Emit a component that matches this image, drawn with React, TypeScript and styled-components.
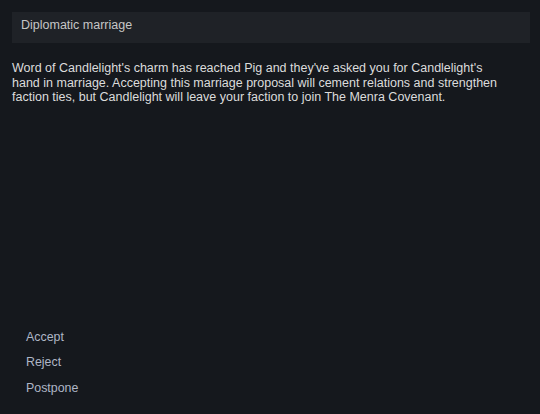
import styled, { createGlobalStyle } from 'styled-components';

const GlobalStyle = createGlobalStyle`
  html, body {
    margin: 0;
    padding: 0;
    background-color: #15181d;
  }
  * {
    box-sizing: border-box;
  }
`;

const Page = styled.div`
  width: 540px;
  height: 414px;
  display: flex;
  flex-direction: column;
  padding: 12px 10px 13px 12px;
  background-color: #15181d;
  font-family: "Liberation Sans", Arial, sans-serif;
  font-size: 12.5px;
`;

const TitleBar = styled.div`
  padding: 6px 9px 10px;
  line-height: 15px;
  background-color: #1f2227;
  color: #c6c6c6;
`;

const Message = styled.p`
  margin: 18px 17px 0 0;
  line-height: 14.5px;
  color: #dcdcdc;
`;

const Options = styled.div`
  margin-top: auto;
  display: flex;
  flex-direction: column;
  align-items: flex-start;
`;

const OptionButton = styled.button`
  border: none;
  background: none;
  padding: 0 14px;
  line-height: 25.5px;
  font-family: inherit;
  font-size: 12.4px;
  color: #aeb6c6;
  cursor: pointer;
`;

const options = ['Accept', 'Reject', 'Postpone'];

const App = () => {
  return (
    <Page>
      <GlobalStyle />
      <TitleBar>Diplomatic marriage</TitleBar>
      <Message>
        Word of Candlelight's charm has reached Pig and they've asked you for Candlelight's
        hand in marriage. Accepting this marriage proposal will cement relations and strengthen
        faction ties, but Candlelight will leave your faction to join The Menra Covenant.
      </Message>
      <Options>
        {options.map((label) => (
          <OptionButton key={label}>{label}</OptionButton>
        ))}
      </Options>
    </Page>
  );
};

export default App;
